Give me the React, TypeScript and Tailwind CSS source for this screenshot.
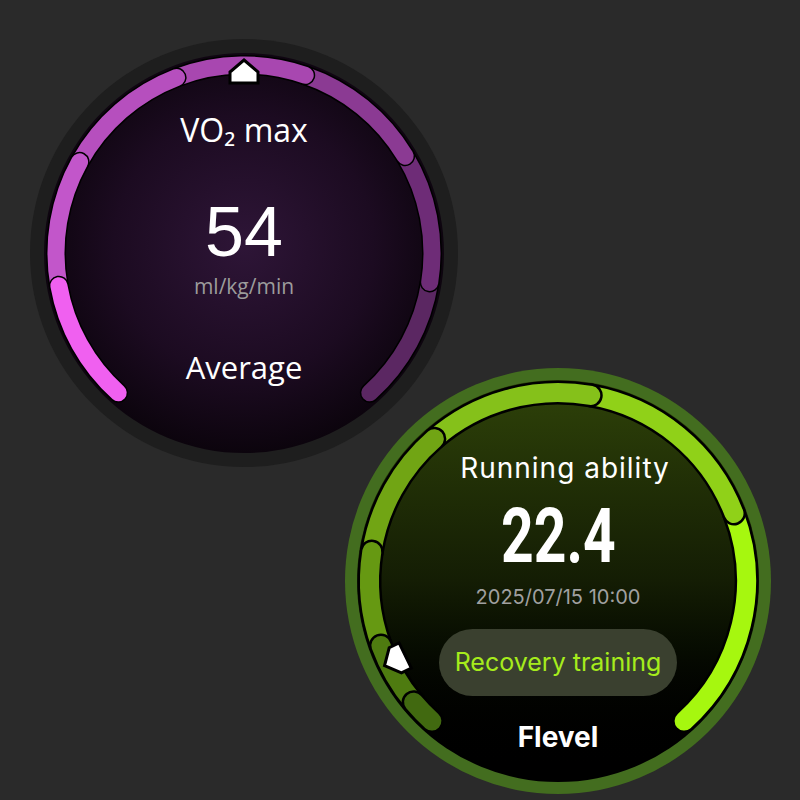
import React from 'react';

type Seg = { from: number; to: number; color: string };

const polar = (c: number, r: number, deg: number) => {
  const a = (deg * Math.PI) / 180;
  return [c + r * Math.sin(a), c - r * Math.cos(a)];
};

const arc = (c: number, r: number, a0: number, a1: number) => {
  const [x0, y0] = polar(c, r, a0);
  const [x1, y1] = polar(c, r, a1);
  const large = a1 - a0 > 180 ? 1 : 0;
  return `M ${x0} ${y0} A ${r} ${r} 0 ${large} 1 ${x1} ${y1}`;
};

// segments drawn last-first so each earlier one sits on top of the next
function Ring({ size, r, width, outline, segs, marker }: { size: number; r: number; width: number; outline: number; segs: Seg[]; marker: number }) {
  const c = size / 2;
  return (
    <svg width={size} height={size} className="absolute inset-0 pointer-events-none">
      {[...segs].reverse().map((s, i) => (
        <g key={i}>
          <path d={arc(c, r, s.from, s.to)} fill="none" stroke="#000" strokeWidth={width + outline * 2} strokeLinecap="round" />
          <path d={arc(c, r, s.from, s.to)} fill="none" stroke={s.color} strokeWidth={width} strokeLinecap="round" />
        </g>
      ))}
      <g transform={`translate(${c} ${c}) rotate(${marker})`}>
        <polygon points="0,-193 14,-181 14,-170 -14,-170 -14,-181" fill="#fff" stroke="#000" strokeWidth={3} strokeLinejoin="miter" />
      </g>
    </svg>
  );
}

const vo2Segs: Seg[] = [
  { from: -138, to: -100, color: '#f060f0' },
  { from: -100, to: -61, color: '#c256ca' },
  { from: -61, to: -21, color: '#b64fbe' },
  { from: -21, to: 19, color: '#a847b0' },
  { from: 19, to: 59, color: '#8b3a93' },
  { from: 59, to: 99, color: '#6e2c77' },
  { from: 99, to: 138, color: '#5b2762' },
];

const runSegs: Seg[] = [
  { from: -138, to: -130, color: '#416910' },
  { from: -130, to: -110, color: '#4e7b10' },
  { from: -110, to: -81, color: '#669912' },
  { from: -81, to: -41, color: '#71a514' },
  { from: -41, to: 10, color: '#85c11a' },
  { from: 10, to: 69, color: '#90d118' },
  { from: 69, to: 138, color: '#a6f70f' },
];

function Vo2Watch() {
  return (
    <div className="relative w-[428px] h-[428px] rounded-full bg-[#1e1e1e] flex items-center justify-center ml-[30px] mt-[39px]">
      <div className="w-[400px] h-[400px] rounded-full bg-[radial-gradient(circle_at_50%_48%,#2e1537_0%,#1c0b21_45%,#070207_80%)] flex flex-col items-center text-white font-['Open_Sans',sans-serif]">
        <div className="pt-[61px] text-[32px] leading-[32px]">VO₂ max</div>
        <div className="mt-[57px] text-[70px] leading-[58px] font-['Liberation_Sans',sans-serif]">54</div>
        <div className="mt-[15px] text-[21px] leading-[21px] text-[#9c9c9c]">ml/kg/min</div>
        <div className="mt-[55px] text-[31px] leading-[31px]">Average</div>
      </div>
      <Ring size={428} r={188} width={17} outline={1.5} segs={vo2Segs} marker={0} />
    </div>
  );
}

function RunWatch() {
  return (
    <div className="relative w-[426px] h-[426px] rounded-full bg-[#436d1f] flex items-center justify-center ml-[345px] -mt-[99px]">
      <div className="w-[402px] h-[402px] rounded-full bg-linear-to-b from-[#2f4309] via-[#141d04] to-black flex flex-col items-center text-white font-['Inter',sans-serif]">
        <div className="pt-[74px] ml-[14px] text-[28px] leading-[28px] tracking-[1px]">Running ability</div>
        <div className="mt-[16px] text-[76px] leading-[76px] font-bold font-['Roboto',sans-serif] scale-x-[0.75]">22.4</div>
        <div className="mt-[13px] text-[20px] leading-[20px] text-[#a0a0a0]">2025/07/15 10:00</div>
        <div className="mt-[22px] w-[238px] h-[67px] rounded-full bg-[#3a402f] flex items-center justify-center text-[25px] text-[#a6ec1c]">
          Recovery training
        </div>
        <div className="mt-[27px] text-[28px] leading-[28px] font-bold">Flevel</div>
      </div>
      <Ring size={426} r={188.5} width={19} outline={2.5} segs={runSegs} marker={-116} />
    </div>
  );
}

export default function App() {
  return (
    <div className="w-[800px] h-[800px] bg-[#2a2a2a] overflow-hidden flex flex-col">
      <Vo2Watch />
      <RunWatch />
    </div>
  );
}
